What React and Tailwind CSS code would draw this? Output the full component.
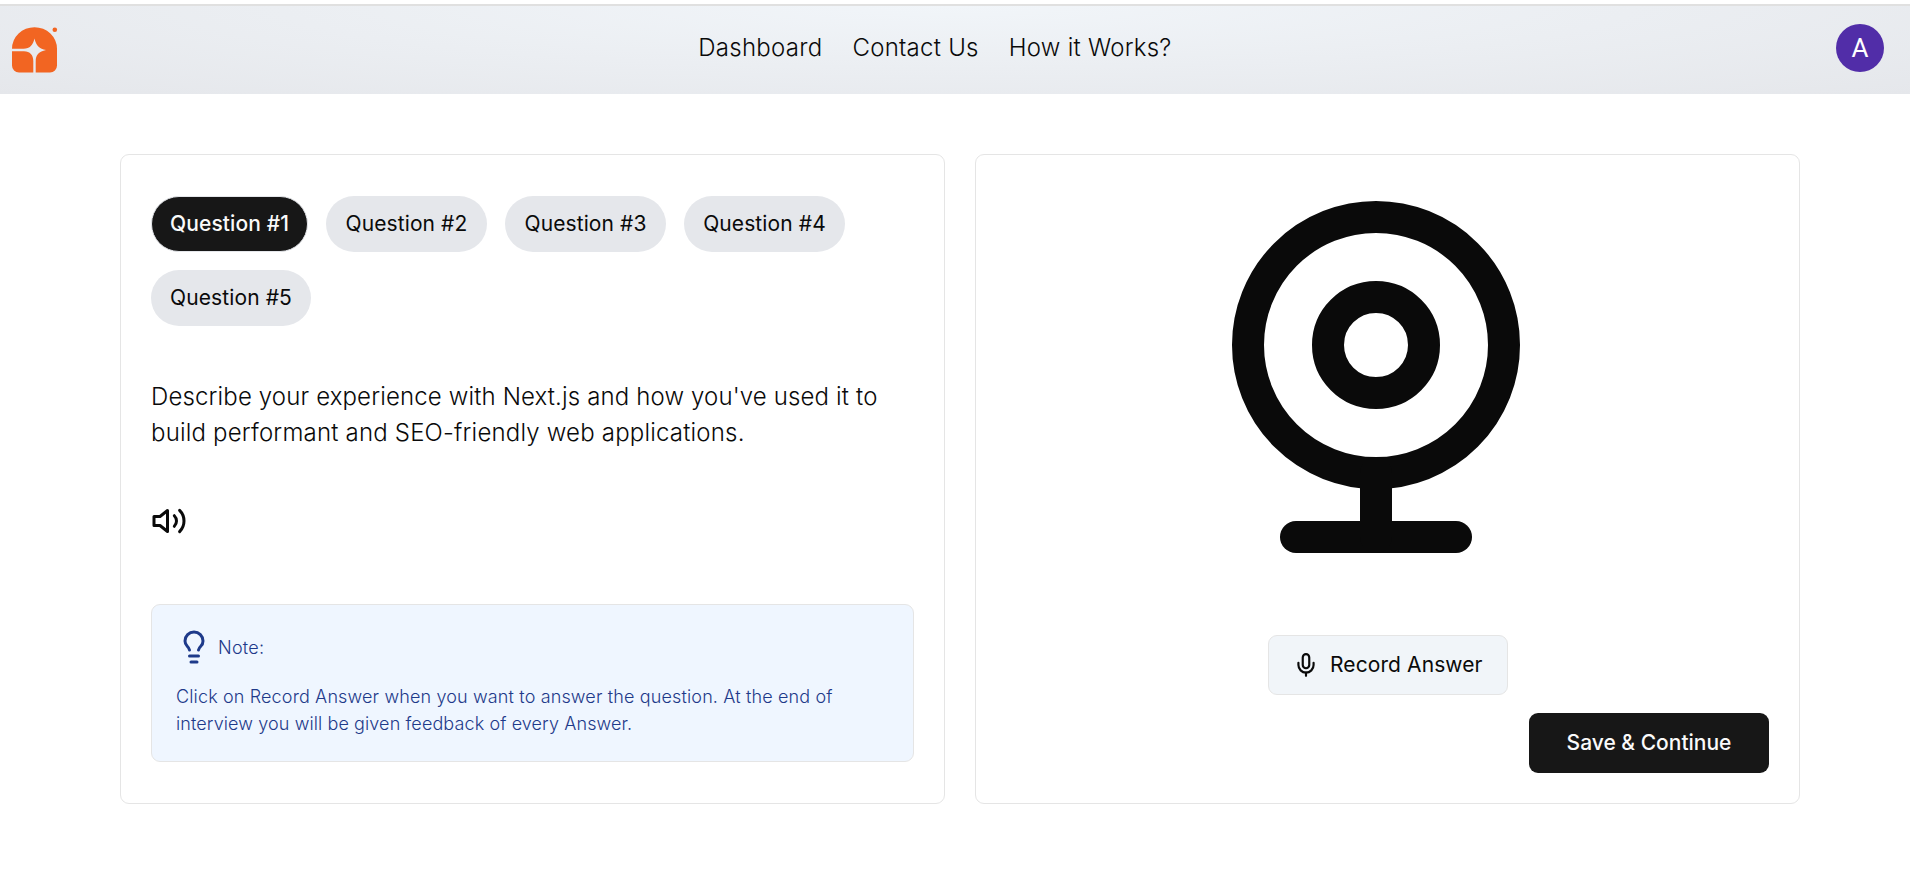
const navItems = ["Dashboard", "Contact Us", "How it Works?"];
const questions = [1, 2, 3, 4, 5];
const pillWidths = ["w-[157px]", "w-[161px]", "w-[161px]", "w-[161px]", "w-[160px]"];

function Logo() {
  return (
    <svg className="h-[46px] w-[46px] overflow-visible" viewBox="0 0 46 46" fill="#f26522">
      <path d="M0 21.7A22.5 21.5 0 0 1 45 21.7V38.5a7 7 0 0 1-7 7H23.7V34.5C23.7 28 27 24.5 34 23.1C27.5 21.8 24 18.5 22.5 11.5C21 18 18 21.7 11.5 21.7Z" />
      <path d="M0 24.2H12C18 24.2 21.3 28 21.3 34V45.5H7a7 7 0 0 1-7-7Z" />
      <circle cx="42.8" cy="2.7" r="2.3" />
    </svg>
  );
}

function Icon({ className, children }) {
  return (
    <svg
      className={className}
      viewBox="0 0 24 24"
      fill="none"
      stroke="currentColor"
      strokeWidth="2"
      strokeLinecap="round"
      strokeLinejoin="round"
    >
      {children}
    </svg>
  );
}

export default function App() {
  return (
    <div className="min-h-[877px] bg-white pt-1 font-['Inter',sans-serif] text-[#0a0a0a]">
      <header className="flex h-[90px] items-center justify-between border-t-2 border-[#e0e0e0] bg-[radial-gradient(ellipse_at_top,#f1f5f9,#e5e7eb)] pr-[26px] pl-3">
        <div className="flex w-[200px] py-2">
          <Logo />
        </div>
        <nav className="flex gap-[30px] pr-[26px] pb-1 text-2xl leading-9 font-light tracking-[0.26px]">
          {navItems.map((item) => (
            <a key={item}>{item}</a>
          ))}
        </nav>
        <div className="flex w-[200px] justify-end pb-1">
          <div className="flex size-12 items-center justify-center rounded-full bg-[#512da8] font-['Roboto',sans-serif] text-[26px] text-white">
            A
          </div>
        </div>
      </header>

      <main className="mt-[60px] ml-[120px] grid w-[1680px] grid-cols-2 gap-[30px]">
        <section className="flex h-[650px] flex-col rounded-[9px] border border-[#e5e5e5] px-[30px] pt-[41px]">
          <div className="flex flex-wrap gap-[18px] tracking-[0.1px]">
            {questions.map((n, i) => (
              <button
                key={n}
                className={
                  "h-14 rounded-full text-[21px] " +
                  pillWidths[i] +
                  (n === 1
                    ? " border border-[#e5e7eb] bg-[#171717] font-medium text-[#fafafa]"
                    : " bg-[#e5e7eb]")
                }
              >
                Question #{n}
              </button>
            ))}
          </div>
          <p className="mt-[53px] text-2xl leading-9 font-light whitespace-nowrap">
            <span className="tracking-[0.14px]">
              Describe your experience with Next.js and how you've used it to
            </span>
            <br />
            <span className="tracking-[0.19px]">
              build performant and SEO-friendly web applications.
            </span>
          </p>
          <Icon className="mt-[52px] size-9">
            <polygon points="11 5 6 9 2 9 2 15 6 15 11 19 11 5" />
            <path d="M15.54 8.46a5 5 0 0 1 0 7.07" />
            <path d="M19.07 4.93a10 10 0 0 1 0 14.14" />
          </Icon>
          <div className="mt-[65px] h-[158px] rounded-[9px] border border-[#e5e5e5] bg-[#eff6ff] px-6 pt-6 text-[#1e3a8a]">
            <div className="flex h-9 items-center gap-[6px]">
              <Icon className="size-9">
                <path d="M15 14c.2-1 .7-1.7 1.5-2.5 1-.9 1.5-2.2 1.5-3.5A6 6 0 0 0 6 8c0 1 .2 2.2 1.5 3.5.7.7 1.3 1.5 1.5 2.5" />
                <path d="M9 18h6" />
                <path d="M10 22h4" />
              </Icon>
              <span className="text-lg leading-[27px] font-light tracking-[0.25px]">Note:</span>
            </div>
            <p className="mt-[18px] text-lg leading-[27px] font-light whitespace-nowrap">
              <span className="tracking-[0.14px]">
                Click on Record Answer when you want to answer the question. At the end of
              </span>
              <br />
              <span className="tracking-[0.1px]">
                interview you will be given feedback of every Answer.
              </span>
            </p>
          </div>
        </section>

        <section className="flex h-[650px] flex-col items-center rounded-[9px] border border-[#e5e5e5] px-[30px] pt-[30px]">
          <Icon className="mr-[22.5px] size-96">
            <circle cx="12" cy="10" r="8" />
            <circle cx="12" cy="10" r="3" />
            <path d="M7 22h10" />
            <path d="M12 22v-4" />
          </Icon>
          <button className="mt-[66px] flex h-[60px] w-60 items-center rounded-[9px] border border-[#e5e5e5] bg-[#f1f5f9] pl-6 text-[21px] tracking-[0.1px]">
            <Icon className="mr-[11.5px] size-[26px]">
              <path d="M12 2a3 3 0 0 0-3 3v7a3 3 0 0 0 6 0V5a3 3 0 0 0-3-3Z" />
              <path d="M19 10v2a7 7 0 0 1-14 0v-2" />
              <path d="M12 19v3" />
            </Icon>
            Record Answer
          </button>
          <button className="mt-[18px] h-[60px] w-60 self-end rounded-[9px] bg-[#171717] text-[21px] font-medium text-[#fafafa]">
            Save &amp; Continue
          </button>
        </section>
      </main>
    </div>
  );
}
